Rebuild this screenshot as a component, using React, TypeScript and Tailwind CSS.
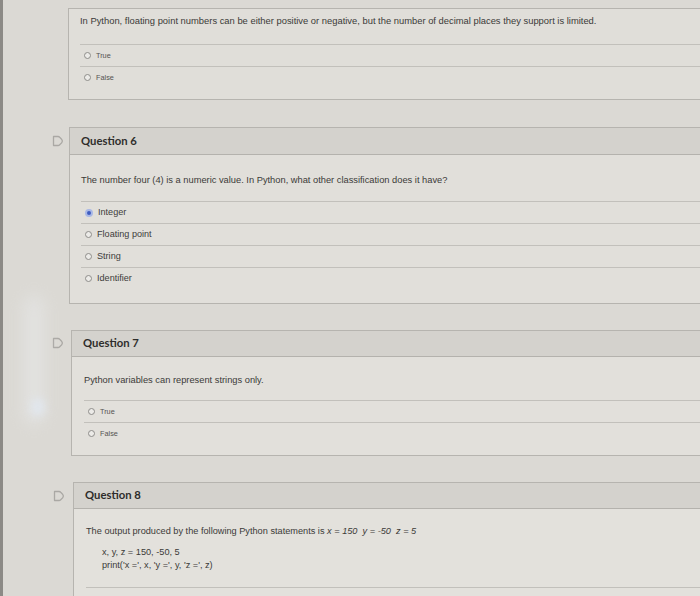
import React from "react";

const Bookmark = () => (
  <svg width="12" height="12" viewBox="0 0 12 12">
    <path
      d="M1.5 1.5H6Q7 1.5 7.7 2.2Q10.4 4.6 10.4 6Q10.4 7.4 7.7 9.8Q7 10.5 6 10.5H1.5Z"
      fill="none"
      stroke="#aaa8a4"
      strokeWidth="1.3"
      strokeLinejoin="round"
    />
  </svg>
);

const Radio = ({ checked }: { checked?: boolean }) =>
  checked ? (
    <span className="inline-block w-[8px] h-[8px] rounded-full bg-[#3e5cc0] border-[2px] border-[#a9b8e6] shrink-0" />
  ) : (
    <span className="inline-block w-[7px] h-[7px] rounded-full border border-[#8e8d8a] bg-[#ecebe8] shrink-0" />
  );

const Option = ({
  label,
  checked,
  small,
}: {
  label: string;
  checked?: boolean;
  small?: boolean;
}) => (
  <div className="h-[22px] border-t border-[#c2c0bb] flex items-center pl-[4px] gap-[5px]">
    <Radio checked={checked} />
    <span
      className={
        small
          ? "text-[7.3px] text-[#555452] leading-none"
          : "text-[9.1px] text-[#3d3c3a] leading-none"
      }
    >
      {label}
    </span>
  </div>
);

const Header = ({ title, h }: { title: string; h: string }) => (
  <div
    className={`${h} bg-[#d4d2cd] border-b border-[#b4b2ad] flex items-center pl-[11px]`}
  >
    <span
      className="text-[11.3px] font-bold text-[#2e2d2b]"
      style={{ fontFamily: "Lato, 'Open Sans', sans-serif" }}
    >
      {title}
    </span>
  </div>
);

export default function App() {
  return (
    <div
      className="relative w-[700px] h-[596px] overflow-hidden bg-[#dbd9d4] flex"
      style={{ fontFamily: "'Liberation Sans', Arial, sans-serif" }}
    >
      <div className="w-[3px] shrink-0 bg-[#8c8a86]" />
      <div className="flex-1 flex flex-col">
        {/* Question 5 (continued) */}
        <div className="flex mt-[8px] pl-[65px]">
          <div className="w-[700px] shrink-0 border-t border-l border-b border-[#b6b4af] bg-[#e0ded9] pl-[11px] pt-[5px] pb-[11px]">
            <div className="h-[13px] leading-[13px] text-[9.4px] text-[#3b3a38] whitespace-nowrap">
              In Python, floating point numbers can be either positive or
              negative, but the number of decimal places they support is
              limited.
            </div>
            <div className="mt-[17px]">
              <Option label="True" small />
              <Option label="False" small />
            </div>
          </div>
        </div>

        {/* Question 6 */}
        <div className="flex mt-[27px] pl-[49px]">
          <div className="w-[17px] shrink-0 pt-[8px]">
            <Bookmark />
          </div>
          <div className="w-[700px] shrink-0 border-t border-l border-b border-[#b6b4af] bg-[#e1dfda]">
            <Header title="Question 6" h="h-[27px]" />
            <div className="pl-[11px] pt-[19px] pb-[14px]">
              <div className="h-[13px] leading-[13px] text-[9.3px] text-[#3b3a38] whitespace-nowrap">
                The number four (4) is a numeric value. In Python, what other
                classification does it have?
              </div>
              <div className="mt-[14px]">
                <Option label="Integer" checked />
                <Option label="Floating point" />
                <Option label="String" />
                <Option label="Identifier" />
              </div>
            </div>
          </div>
        </div>

        {/* Question 7 */}
        <div className="flex mt-[26px] pl-[49px]">
          <div className="w-[19px] shrink-0 pt-[7px]">
            <Bookmark />
          </div>
          <div className="w-[700px] shrink-0 border-t border-l border-b border-[#b6b4af] bg-[#e2e0db]">
            <Header title="Question 7" h="h-[26px]" />
            <div className="pl-[12px] pt-[17px] pb-[11px]">
              <div className="h-[13px] leading-[13px] text-[9.3px] text-[#3b3a38] whitespace-nowrap">
                Python variables can represent strings only.
              </div>
              <div className="mt-[13px]">
                <Option label="True" small />
                <Option label="False" small />
              </div>
            </div>
          </div>
        </div>

        {/* Question 8 */}
        <div className="flex mt-[26px] pl-[50px]">
          <div className="w-[20px] shrink-0 pt-[8px]">
            <Bookmark />
          </div>
          <div className="w-[700px] shrink-0 border-t border-l border-[#b6b4af] bg-[#e3e1dc]">
            <Header title="Question 8" h="h-[26px]" />
            <div className="pl-[12px] pt-[16px]">
              <div className="h-[13px] leading-[13px] text-[9.2px] text-[#3b3a38] whitespace-nowrap">
                The output produced by the following Python statements is{" "}
                <i>x = 150&nbsp; y = -50&nbsp; z = 5</i>
              </div>
              <div className="mt-[8px] pl-[16px] text-[9.2px] text-[#3b3a38]">
                <div className="h-[13px] leading-[13px]">x, y, z = 150, -50, 5</div>
                <div className="h-[13px] leading-[13px]">
                  print('x =', x, 'y =', y, 'z =', z)
                </div>
              </div>
              <div className="mt-[15px] border-t border-[#c2c0bb] h-[20px]" />
            </div>
          </div>
        </div>
      </div>

      {/* screen glare */}
      <div className="pointer-events-none absolute left-[24px] top-[295px] w-[20px] h-[130px] rounded-full bg-[#eceef0] opacity-45 blur-[8px]" />
      <div className="pointer-events-none absolute left-[31px] top-[398px] w-[14px] h-[18px] rounded-full bg-[#e2eaf5] opacity-70 blur-[4px]" />
    </div>
  );
}
